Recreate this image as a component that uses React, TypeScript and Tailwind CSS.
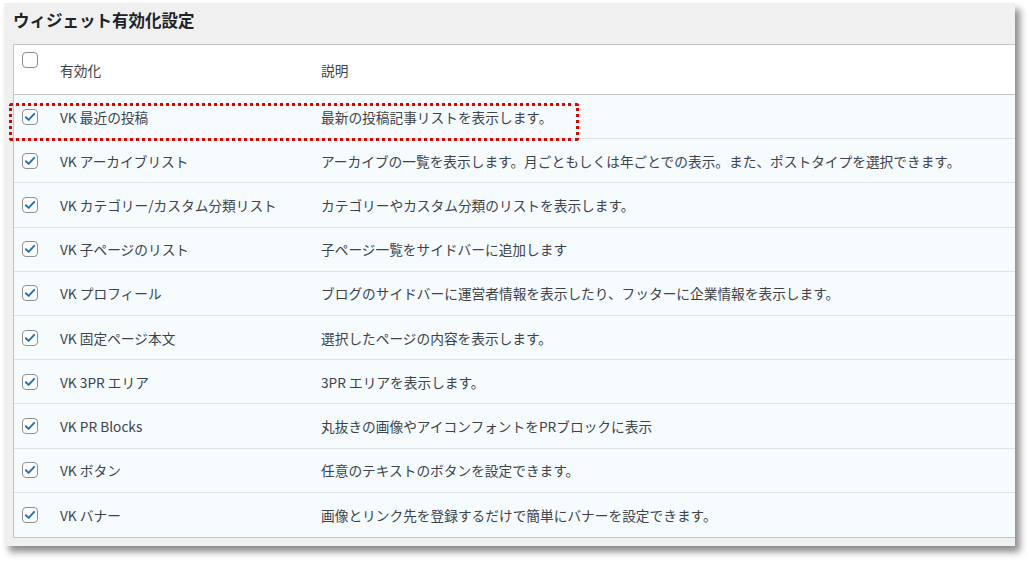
import React from 'react';

const widgets = [
  { name: 'VK 最近の投稿', desc: '最新の投稿記事リストを表示します。' },
  { name: 'VK アーカイブリスト', desc: 'アーカイブの一覧を表示します。月ごともしくは年ごとでの表示。また、ポストタイプを選択できます。' },
  { name: 'VK カテゴリー/カスタム分類リスト', desc: 'カテゴリーやカスタム分類のリストを表示します。' },
  { name: 'VK 子ページのリスト', desc: '子ページ一覧をサイドバーに追加します' },
  { name: 'VK プロフィール', desc: 'ブログのサイドバーに運営者情報を表示したり、フッターに企業情報を表示します。' },
  { name: 'VK 固定ページ本文', desc: '選択したページの内容を表示します。' },
  { name: 'VK 3PR エリア', desc: '3PR エリアを表示します。' },
  { name: 'VK PR Blocks', desc: '丸抜きの画像やアイコンフォントをPRブロックに表示' },
  { name: 'VK ボタン', desc: '任意のテキストのボタンを設定できます。' },
  { name: 'VK バナー', desc: '画像とリンク先を登録するだけで簡単にバナーを設定できます。' },
];

function Checkbox({ checked }: { checked: boolean }) {
  return (
    <span className="flex h-[16px] w-[16px] items-center justify-center rounded-[4px] border border-[#8c8f94] bg-white">
      {checked && (
        <svg viewBox="0 0 16 16" className="h-[14px] w-[14px]">
          <path d="M3.2 8.3 L6.4 11.3 L12.8 4.4" fill="none" stroke="#2271b1" strokeWidth="2.2" strokeLinecap="round" strokeLinejoin="round" />
        </svg>
      )}
    </span>
  );
}

export default function App() {
  return (
    <div className="h-[562px] w-[1028px] bg-white pl-[4px] pt-[3px] font-['Meiryo','Noto_Sans_CJK_JP',sans-serif] text-[#3c434a]">
      <div className="relative flex h-[543px] w-[1011px] flex-col bg-[#f0f0f1] pl-[9px] shadow-[5px_6px_7px_rgba(0,0,0,0.45)]">
        <h2 className="pt-[6px] text-[16.5px] font-bold leading-[22px] text-[#1d2327]">ウィジェット有効化設定</h2>
        <div className="mt-[13px] border border-r-0 border-[#c3c4c7] text-[13.7px]">
          <div className="flex h-[50px] border-b border-[#c3c4c7] bg-white">
            <div className="w-[35px] pl-[8px] pt-[7px]">
              <Checkbox checked={false} />
            </div>
            <div className="w-[261px] pl-[11px] pt-[16px] leading-[18px]">有効化</div>
            <div className="pl-[11px] pt-[16px] leading-[18px]">説明</div>
          </div>
          {widgets.map((w, i) => (
            <div
              key={w.name}
              className={`flex h-[44.2px] items-center bg-[#f6fbfe] ${i < widgets.length - 1 ? 'border-b border-[#dfe3e6]' : ''}`}
            >
              <div className="w-[35px] pl-[8px]">
                <Checkbox checked />
              </div>
              <div className="w-[261px] pl-[11px] leading-[18px]">{w.name}</div>
              <div className="pl-[11px] leading-[18px]">{w.desc}</div>
            </div>
          ))}
        </div>
        <div className="pointer-events-none absolute left-[5px] top-[100px] h-[38px] w-[570px] rounded-[3px] border-[3px] border-dotted border-[#e00000]" />
      </div>
    </div>
  );
}
